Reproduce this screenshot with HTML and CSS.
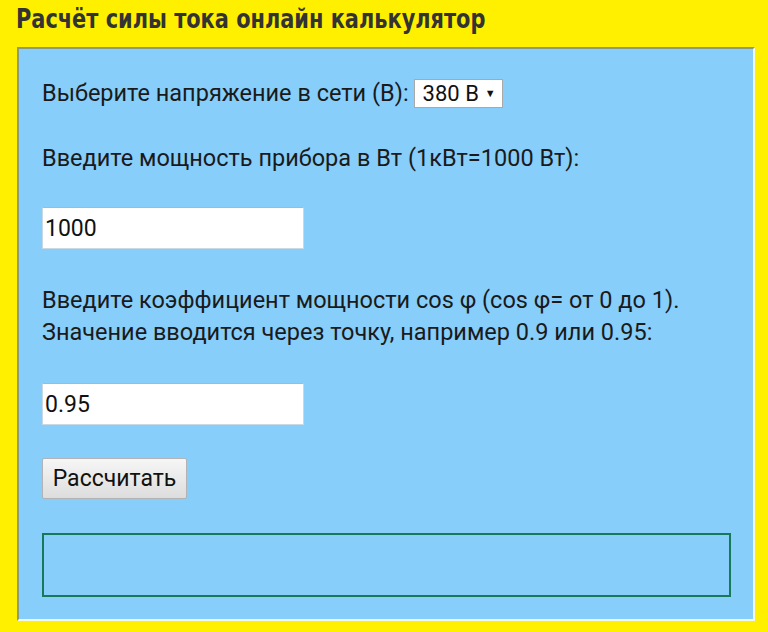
FILE: index.html
```html
<!DOCTYPE html>
<html lang="ru">
<head>
<meta charset="utf-8">
<title>Расчёт силы тока онлайн калькулятор</title>
<link rel="stylesheet" href="styles.css">
</head>
<body>
<h1 class="title"><span class="title-text">Расчёт силы тока онлайн калькулятор</span></h1>
<div class="panel">
  <p class="row">Выберите напряжение в сети (В): <span class="select">380 В <span class="arrow">▼</span></span></p>
  <p class="label">Введите мощность прибора в Вт (1кВт=1000 Вт):</p>
  <div class="field">1000</div>
  <p class="label two">Введите коэффициент мощности cos φ (cos φ= от 0 до 1).<br>Значение вводится через точку, например 0.9 или 0.95:</p>
  <div class="field">0.95</div>
  <div class="btn">Рассчитать</div>
  <div class="result"></div>
</div>
</body>
</html>
```
FILE: styles.css
```css
html, body {
  margin: 0;
  padding: 0;
  background: #fff000;
  width: 768px;
  height: 632px;
  overflow: hidden;
}
.title {
  margin: 0;
  padding: 2px 0 0 16px;
  height: 45px;
  box-sizing: border-box;
  font-family: "DejaVu Sans Condensed", "DejaVu Sans", sans-serif;
  font-stretch: condensed;
  font-weight: bold;
  font-size: 27px;
  line-height: 34px;
  color: #333333;
  white-space: nowrap;
}
.title-text {
  display: inline-block;
  transform: scaleX(0.86);
  transform-origin: left center;
}
.panel {
  margin: 2px 0 0 17px;
  width: 738px;
  height: 574px;
  box-sizing: border-box;
  background: #87cefa;
  border-style: solid;
  border-width: 2px;
  border-color: #8a9a7e #f4f6e8 #f4f6e8 #8a9a7e;
  padding: 29px 0 0 23px;
  font-family: Roboto, "Liberation Sans", sans-serif;
  font-size: 23.5px;
  color: #1a1a1a;
}
.panel p { margin: 0; }
.row {
  display: flex;
  align-items: center;
  height: 30px;
  gap: 5px;
}
.select {
  display: inline-flex;
  align-items: center;
  height: 29px;
  box-sizing: border-box;
  background: #fff;
  border: 1px solid #a9a9a9;
  padding: 0 6px 0 8px;
  color: #111;
  gap: 6px;
  font-size: 22px;
}
.arrow { font-size: 11px; }
.label {
  margin-top: 34px !important;
  line-height: 32px;
}
.two { margin-top: 35px !important; }
.field {
  margin-top: 33px;
  width: 262px;
  height: 42px;
  box-sizing: border-box;
  background: #fff;
  border-top: 1px solid #a8b8c4;
  border-left: 1px solid #c8d8e4;
  border-right: 1px solid #c8d8e4;
  border-bottom: 1px solid #c8d8e4;
  padding: 0 2px;
  display: flex;
  align-items: center;
  color: #111;
  font-size: 23px;
}
.two + .field { margin-top: 35px; }
.btn {
  margin-top: 33px;
  width: 145px;
  height: 41px;
  box-sizing: border-box;
  border: 1px solid #b3b3b3;
  border-radius: 2px;
  background: linear-gradient(#f6f6f6, #dddddd);
  display: flex;
  align-items: center;
  justify-content: center;
  color: #111;
  font-size: 23px;
}
.result {
  margin-top: 34px;
  width: 689px;
  height: 64px;
  box-sizing: border-box;
  border: 2px solid #167a5a;
}
```
